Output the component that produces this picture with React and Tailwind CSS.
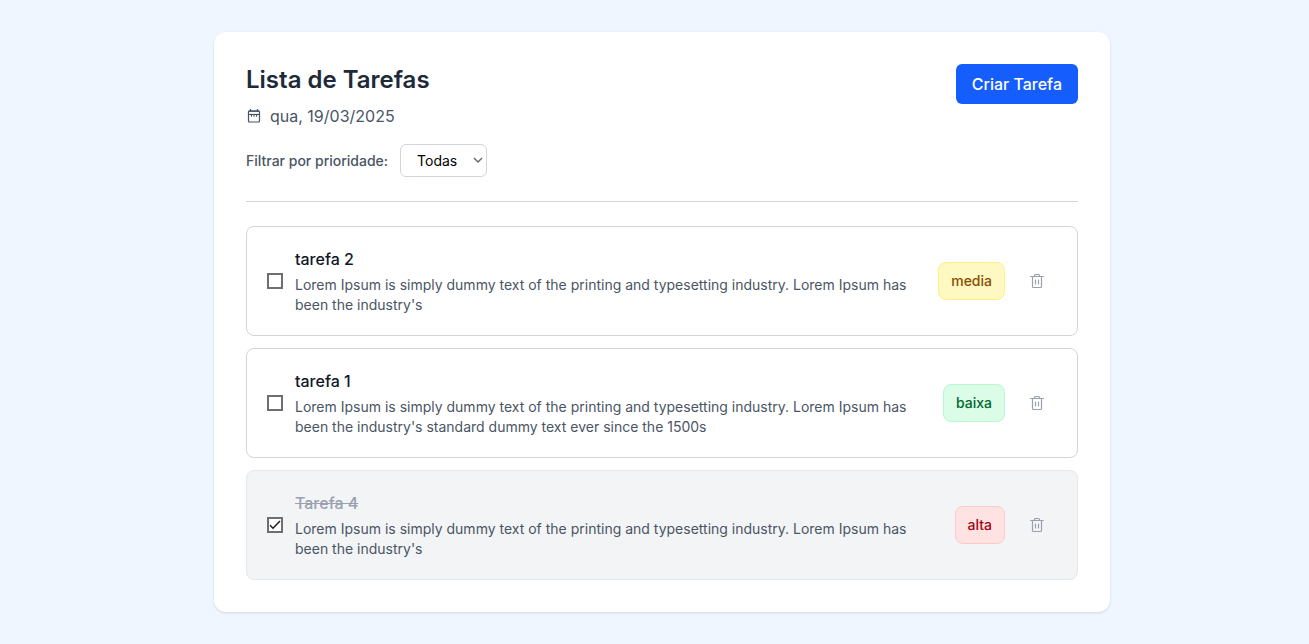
import { useState } from "react";

const INITIAL_TASKS = [
  {
    id: 2,
    title: "tarefa 2",
    description:
      "Lorem Ipsum is simply dummy text of the printing and typesetting industry. Lorem Ipsum has been the industry's",
    priority: "media",
    done: false,
  },
  {
    id: 1,
    title: "tarefa 1",
    description:
      "Lorem Ipsum is simply dummy text of the printing and typesetting industry. Lorem Ipsum has been the industry's standard dummy text ever since the 1500s",
    priority: "baixa",
    done: false,
  },
  {
    id: 4,
    title: "Tarefa 4",
    description:
      "Lorem Ipsum is simply dummy text of the printing and typesetting industry. Lorem Ipsum has been the industry's",
    priority: "alta",
    done: true,
  },
];

const BADGE = {
  media: "border-yellow-200 bg-yellow-100 text-yellow-800",
  baixa: "border-green-200 bg-green-100 text-green-800",
  alta: "border-red-200 bg-red-100 text-red-800",
};

function CalendarIcon() {
  return (
    <svg viewBox="0 0 16 16" className="size-4" fill="none" stroke="currentColor" aria-hidden="true">
      <rect x="2.5" y="3" width="11" height="11" rx="1" strokeWidth="1.2" />
      <path d="M4.5 1v2M11.5 1v2" strokeWidth="1.3" />
      <path d="M2.5 3.2h11" strokeWidth="1.4" />
      <path d="M2.5 6.5h11" strokeWidth="1.2" />
      <path d="M5.5 6.5v2.2M8 6.5v2.2M10.5 6.5v2.2" strokeWidth="1" />
    </svg>
  );
}

function TrashIcon() {
  return (
    <svg
      viewBox="0 0 16 16"
      className="block size-4"
      fill="none"
      stroke="currentColor"
      strokeWidth="1.2"
      strokeLinecap="round"
      strokeLinejoin="round"
      aria-hidden="true"
    >
      <path d="M1.6 3.5h12.8" />
      <path d="M5.5 3.5v-1a1 1 0 0 1 1-1h3a1 1 0 0 1 1 1v1" />
      <path d="M3.5 3.5v10a1 1 0 0 0 1 1h7a1 1 0 0 0 1-1v-10" />
      <path d="M6.5 7v4M9.5 7v4" />
    </svg>
  );
}

function Task({ task, onToggle, onRemove }) {
  const id = `task-${task.id}`;
  return (
    <li
      className={`flex items-center rounded-lg border p-5 ${
        task.done ? "border-gray-200 bg-gray-100" : "border-gray-300 bg-white"
      }`}
    >
      <span className="relative flex size-4 shrink-0">
        <input
          id={id}
          type="checkbox"
          checked={task.done}
          onChange={onToggle}
          className="size-4 appearance-none border-2 border-[#6f6f6f] bg-white"
        />
        {task.done && (
          <svg
            viewBox="0 0 16 16"
            className="pointer-events-none absolute inset-0 size-4"
            fill="none"
            stroke="#222"
            strokeWidth="1.6"
            aria-hidden="true"
          >
            <path d="M3 8.2l3 3L13 4" />
          </svg>
        )}
      </span>
      <div className="ml-3 min-w-0 flex-1">
        <label
          htmlFor={id}
          className={`block text-base font-medium ${
            task.done ? "text-gray-400 line-through" : "text-gray-900"
          }`}
        >
          {task.title}
        </label>
        <p className="mt-1 max-w-[620px] text-sm text-gray-600">{task.description}</p>
      </div>
      <div className="flex shrink-0 items-center gap-3">
        <span className={`rounded-lg border px-3 py-2 text-sm font-medium ${BADGE[task.priority]}`}>
          {task.priority}
        </span>
        <button
          type="button"
          aria-label={`Excluir ${task.title}`}
          onClick={onRemove}
          className="px-3 py-2 text-gray-400"
        >
          <TrashIcon />
        </button>
      </div>
    </li>
  );
}

export default function App() {
  const [tasks, setTasks] = useState(INITIAL_TASKS);
  const [filter, setFilter] = useState("todas");
  const visible = tasks.filter((t) => filter === "todas" || t.priority === filter);

  return (
    <div className="min-h-screen bg-blue-50 py-8 pl-[15px] font-['Inter',sans-serif]">
      <main className="mx-auto max-w-4xl rounded-xl bg-white p-8 shadow-sm">
        <header className="flex items-start justify-between border-b border-gray-300 pb-6">
          <div>
            <h1 className="text-2xl font-semibold text-gray-800">Lista de Tarefas</h1>
            <p className="mt-2 flex items-center gap-2 text-base text-gray-600">
              <CalendarIcon />
              qua, 19/03/2025
            </p>
            <div className="mt-4 flex items-center gap-3">
              <label htmlFor="priority" className="text-sm font-medium text-gray-600">
                Filtrar por prioridade:
              </label>
              <span className="relative flex">
                <select
                  id="priority"
                  value={filter}
                  onChange={(e) => setFilter(e.target.value)}
                  className="h-[33px] w-[87px] appearance-none rounded-md border border-gray-300 bg-white pl-4 text-sm text-black"
                >
                  <option value="todas">Todas</option>
                  <option value="alta">Alta</option>
                  <option value="media">Media</option>
                  <option value="baixa">Baixa</option>
                </select>
                <svg
                  viewBox="0 0 10 6"
                  className="pointer-events-none absolute top-[13px] right-1 h-1.5 w-2.5"
                  fill="none"
                  stroke="#666"
                  strokeWidth="1.4"
                  aria-hidden="true"
                >
                  <path d="M1 1l4 4 4-4" />
                </svg>
              </span>
            </div>
          </div>
          <button
            type="button"
            className="rounded-md bg-[#155dfc] px-4 py-2 text-base font-medium text-white"
          >
            Criar Tarefa
          </button>
        </header>
        <ul className="mt-6 flex flex-col gap-3">
          {visible.map((task) => (
            <Task
              key={task.id}
              task={task}
              onToggle={() =>
                setTasks(tasks.map((t) => (t.id === task.id ? { ...t, done: !t.done } : t)))
              }
              onRemove={() => setTasks(tasks.filter((t) => t.id !== task.id))}
            />
          ))}
        </ul>
      </main>
    </div>
  );
}
